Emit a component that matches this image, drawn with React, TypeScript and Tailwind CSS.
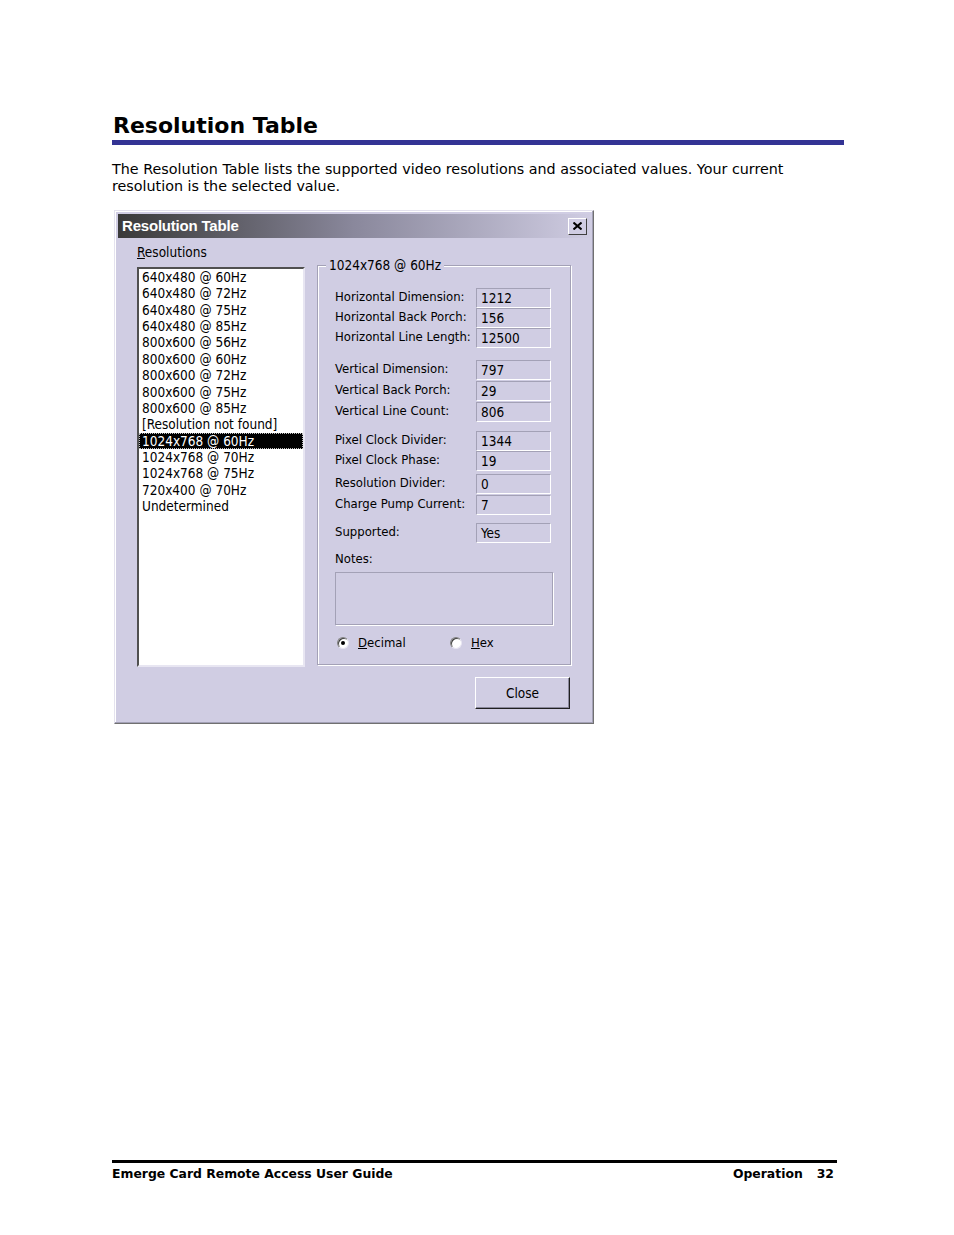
import React from 'react';

const resolutions = [
  '640x480 @ 60Hz',
  '640x480 @ 72Hz',
  '640x480 @ 75Hz',
  '640x480 @ 85Hz',
  '800x600 @ 56Hz',
  '800x600 @ 60Hz',
  '800x600 @ 72Hz',
  '800x600 @ 75Hz',
  '800x600 @ 85Hz',
  '[Resolution not found]',
  '1024x768 @ 60Hz',
  '1024x768 @ 70Hz',
  '1024x768 @ 75Hz',
  '720x400 @ 70Hz',
  'Undetermined',
];

// label, value, gap above the row
const rows: { label: string; value: string; gap: string }[] = [
  { label: 'Horizontal Dimension:', value: '1212', gap: 'mt-0' },
  { label: 'Horizontal Back Porch:', value: '156', gap: 'mt-0' },
  { label: 'Horizontal Line Length:', value: '12500', gap: 'mt-0' },
  { label: 'Vertical Dimension:', value: '797', gap: 'mt-[12px]' },
  { label: 'Vertical Back Porch:', value: '29', gap: 'mt-[1px]' },
  { label: 'Vertical Line Count:', value: '806', gap: 'mt-[1px]' },
  { label: 'Pixel Clock Divider:', value: '1344', gap: 'mt-[9px]' },
  { label: 'Pixel Clock Phase:', value: '19', gap: 'mt-0' },
  { label: 'Resolution Divider:', value: '0', gap: 'mt-[3px]' },
  { label: 'Charge Pump Current:', value: '7', gap: 'mt-[1px]' },
  { label: 'Supported:', value: 'Yes', gap: 'mt-[8px]' },
];

const winFont = "font-['DejaVu_Sans_Condensed','Liberation_Sans',sans-serif]";

function Field({ value }: { value: string }) {
  return (
    <div className="w-[75px] h-[20px] border border-t-[#a3a1b6] border-l-[#a3a1b6] border-b-white border-r-white pl-[4px] flex items-center text-[13.5px] text-black">
      {value}
    </div>
  );
}

function Radio({ checked, label, hot }: { checked: boolean; label: string; hot: string }) {
  return (
    <div className="flex items-center">
      <div className="w-[12px] h-[12px] rounded-full bg-white border border-t-[#808080] border-l-[#808080] border-b-[#e8e6f2] border-r-[#e8e6f2] shadow-[inset_1px_1px_0_#404040] flex items-center justify-center">
        {checked && <div className="w-[4px] h-[4px] rounded-full bg-black" />}
      </div>
      <span className="ml-[9px] text-[13px]">
        <span className="underline">{hot}</span>
        {label}
      </span>
    </div>
  );
}

function ResolutionDialog() {
  return (
    <div className={`ml-[2px] w-[480px] h-[514px] bg-[#d0cde3] border border-t-[#e4e2ee] border-l-[#e4e2ee] border-b-[#707070] border-r-[#707070] shadow-[inset_-1px_-1px_0_#a3a1b6,inset_1px_1px_0_#fff] p-[3px] flex flex-col ${winFont}`}>
      {/* title bar */}
      <div className="h-[24px] bg-gradient-to-r from-[#3a3a3a] via-[#8a889c] to-[#cfcce2] flex items-center justify-between pl-[4px] pr-[3px]">
        <span className="text-white font-bold text-[15px] font-['Liberation_Sans',sans-serif] tracking-[-0.2px]">Resolution Table</span>
        <div className="w-[19px] h-[17px] bg-[#d0cde3] border border-t-white border-l-white border-b-[#404040] border-r-[#404040] flex items-center justify-center">
          <svg width="9" height="8" viewBox="0 0 9 8">
            <path d="M0.5 0.5 L8.5 7.5 M8.5 0.5 L0.5 7.5" stroke="black" strokeWidth="2" />
          </svg>
        </div>
      </div>

      <div className="flex pl-[19px] pt-[6px] text-black">
        {/* left column */}
        <div className="w-[168px] flex flex-col">
          <div className="h-[16px] leading-[16px] text-[13.5px]">
            <span className="underline">R</span>esolutions
          </div>
          <div className="mt-[7px] h-[400px] bg-white border-2 border-t-[#505050] border-l-[#505050] border-b-[#e8e6f2] border-r-[#e8e6f2] text-[13.5px]">
            {resolutions.map((r) => {
              const sel = r === '1024x768 @ 60Hz';
              return (
                <div
                  key={r}
                  className={`h-[16.36px] leading-[16.36px] pl-[3px] whitespace-nowrap ${sel ? 'bg-black text-white outline-1 outline-dotted outline-[#c0c0c0] -outline-offset-1' : ''}`}
                >
                  {r}
                </div>
              );
            })}
          </div>
        </div>

        {/* right column: group box */}
        <div className="ml-[12px] mt-[21px] w-[254px] h-[400px] relative border border-[#a3a1b6] shadow-[inset_1px_1px_0_#fff,1px_1px_0_#fff] pt-[22px] pl-[17px] flex flex-col">
          <span className="absolute -top-[9px] left-[8px] px-[3px] bg-[#d0cde3] text-[13.5px] leading-[16px]">1024x768 @ 60Hz</span>
          {rows.map((row) => (
            <div key={row.label} className={`flex items-center h-[20px] ${row.gap}`}>
              <span className="w-[141px] text-[13px] whitespace-nowrap -mt-[2px]">{row.label}</span>
              <Field value={row.value} />
            </div>
          ))}
          <div className="mt-[8px] h-[16px] leading-[16px] text-[13px]">Notes:</div>
          <div className="mt-[5px] w-[218px] h-[53px] border border-[#a3a1b6] shadow-[1px_1px_0_#fff]" />
          <div className="mt-[10px] flex items-center h-[16px] pl-[2px]">
            <div className="w-[113px]">
              <Radio checked label="ecimal" hot="D" />
            </div>
            <Radio checked={false} label="ex" hot="H" />
          </div>
        </div>
      </div>

      {/* button row */}
      <div className="flex justify-end pr-[20px] mt-[10px]">
        <button className="w-[95px] h-[32px] bg-[#d0cde3] border border-t-white border-l-white border-b-[#202020] border-r-[#202020] shadow-[inset_-1px_-1px_0_#8a889c] text-[13.5px] text-black">
          Close
        </button>
      </div>
    </div>
  );
}

export default function App() {
  return (
    <div className="w-[954px] h-[1235px] bg-white flex flex-col font-['DejaVu_Sans','Verdana',sans-serif] text-black">
      <div className="pt-[112px] px-[112px]">
        <h1 className="text-[22px] leading-[28px] font-bold pl-[1px]">Resolution Table</h1>
        <div className="h-[5px] w-[732px] bg-[#333394]" />
        <p className="mt-[16px] text-[14.3px] leading-[17px] w-[720px]">
          The Resolution Table lists the supported video resolutions and associated values. Your current resolution is the selected value.
        </p>
        <div className="mt-[15px]">
          <ResolutionDialog />
        </div>
      </div>

      <footer className="mt-auto mb-[53px] mx-[112px] w-[725px] border-t-[3px] border-black pt-[3px] flex justify-between text-[12.4px] font-bold leading-[16px]">
        <span>Emerge Card Remote Access User Guide</span>
        <span className="pr-[3px]">
          Operation<span className="ml-[14px]">32</span>
        </span>
      </footer>
    </div>
  );
}
